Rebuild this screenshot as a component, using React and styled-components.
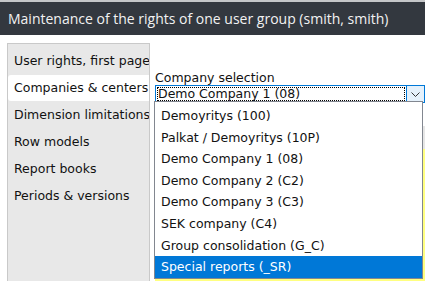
import React from "react";
import styled, { createGlobalStyle } from "styled-components";

const GlobalStyle = createGlobalStyle`
  html, body {
    margin: 0;
    padding: 0;
    background: #ffffff;
    overflow: hidden;
  }
  body {
    border-top: 2px solid #c4c6c8;
  }
`;

const menu = [
  "User rights, first page",
  "Companies & centers",
  "Dimension limitations",
  "Row models",
  "Report books",
  "Periods & versions",
];

const companies = [
  "Demoyritys (100)",
  "Palkat / Demoyritys (10P)",
  "Demo Company 1 (08)",
  "Demo Company 2 (C2)",
  "Demo Company 3 (C3)",
  "SEK company (C4)",
  "Group consolidation (G_C)",
  "Special reports (_SR)",
];

function App() {
  return (
    <>
      <GlobalStyle />
      <Page>
        <Header>Maintenance of the rights of one user group (smith, smith)</Header>
        <Body>
          <Sidebar>
            {menu.map((m) => (
              <MenuItem key={m} active={m === "Companies & centers"}>
                {m}
              </MenuItem>
            ))}
          </Sidebar>
          <Content>
            <Label>Company selection</Label>
            <SelectWrap>
              <Select>
                <SelectText>Demo Company 1 (08)</SelectText>
                <Arrow>
                  <svg width="9" height="5" viewBox="0 0 9 5">
                    <path d="M0.5 0.5 L4.5 4.5 L8.5 0.5" fill="none" stroke="#333" strokeWidth="1" />
                  </svg>
                </Arrow>
              </Select>
              <Dropdown>
                {companies.map((c) => (
                  <Option key={c} selected={c === "Special reports (_SR)"}>
                    {c}
                  </Option>
                ))}
              </Dropdown>
            </SelectWrap>
            <Panel>
              <PanelGap />
              <PanelBar />
              <PanelBody />
            </Panel>
          </Content>
        </Body>
      </Page>
    </>
  );
}

const Page = styled.div`
  height: 279px;
  display: flex;
  flex-direction: column;
`;

const Header = styled.div`
  height: 33px;
  background: #33383f;
  color: #f2f2f2;
  font-family: "Open Sans", sans-serif;
  font-size: 14px;
  line-height: 33px;
  padding-left: 8px;
  white-space: nowrap;
`;

const Body = styled.div`
  flex: 1;
  display: flex;
  padding: 8px 0 0 7px;
  min-height: 0;
`;

const Sidebar = styled.div`
  width: 141px;
  flex-shrink: 0;
  background: #e8e8e8;
  border: 1px solid #c9c9c9;
  border-bottom: none;
  padding-top: 4px;
  overflow: hidden;
`;

const MenuItem = styled.div`
  height: 26px;
  line-height: 26px;
  margin-bottom: 1px;
  padding-left: 6px;
  font-family: "DejaVu Sans", Verdana, sans-serif;
  font-size: 12.5px;
  color: #111;
  white-space: nowrap;
  background: ${(p) => (p.active ? "#ffffff" : "transparent")};
  border-radius: ${(p) => (p.active ? "3px 0 0 3px" : "0")};
`;

const Content = styled.div`
  flex: 1;
  padding-top: 27px;
  display: flex;
  flex-direction: column;
  min-width: 0;
`;

const Label = styled.div`
  padding-left: 5px;
  font-family: "DejaVu Sans", Verdana, sans-serif;
  font-size: 12.5px;
  line-height: 15px;
  color: #111;
`;

const SelectWrap = styled.div`
  position: relative;
  margin-left: 5px;
  z-index: 2;
`;

const Select = styled.div`
  width: 268px;
  height: 16px;
  border: 1px solid #0078d7;
  display: flex;
  background: #fff;
`;

const SelectText = styled.div`
  flex: 1;
  margin: 1px;
  outline: 1px dotted #000;
  outline-offset: -1px;
  font-family: "DejaVu Sans", Verdana, sans-serif;
  font-size: 12.5px;
  line-height: 14px;
  padding-left: 1px;
  overflow: hidden;
  color: #111;
`;

const Arrow = styled.div`
  width: 17px;
  border-left: 1px solid #0078d7;
  background: #e5f1fb;
  display: flex;
  align-items: center;
  justify-content: center;
`;

const Dropdown = styled.div`
  position: absolute;
  top: 16px;
  left: -1px;
  width: 267px;
  background: #fff;
  border: 1px solid #828790;
  padding-top: 3px;
`;

const Option = styled.div`
  height: 21.6px;
  line-height: 21.6px;
  padding-left: 6px;
  font-family: "DejaVu Sans", Verdana, sans-serif;
  font-size: 12.5px;
  white-space: nowrap;
  color: ${(p) => (p.selected ? "#ffffff" : "#111")};
  background: ${(p) => (p.selected ? "#0078d7" : "transparent")};
`;

const Panel = styled.div`
  flex: 1;
  display: flex;
  flex-direction: column;
  margin: -4px 0 0 5px;
  border-top: 1px solid #c8c8c8;
`;

const PanelGap = styled.div`
  height: 26px;
`;

const PanelBar = styled.div`
  height: 23px;
  background: #e6e6e6;
`;

const PanelBody = styled.div`
  flex: 1;
  background: #ffff80;
`;

export default App;
